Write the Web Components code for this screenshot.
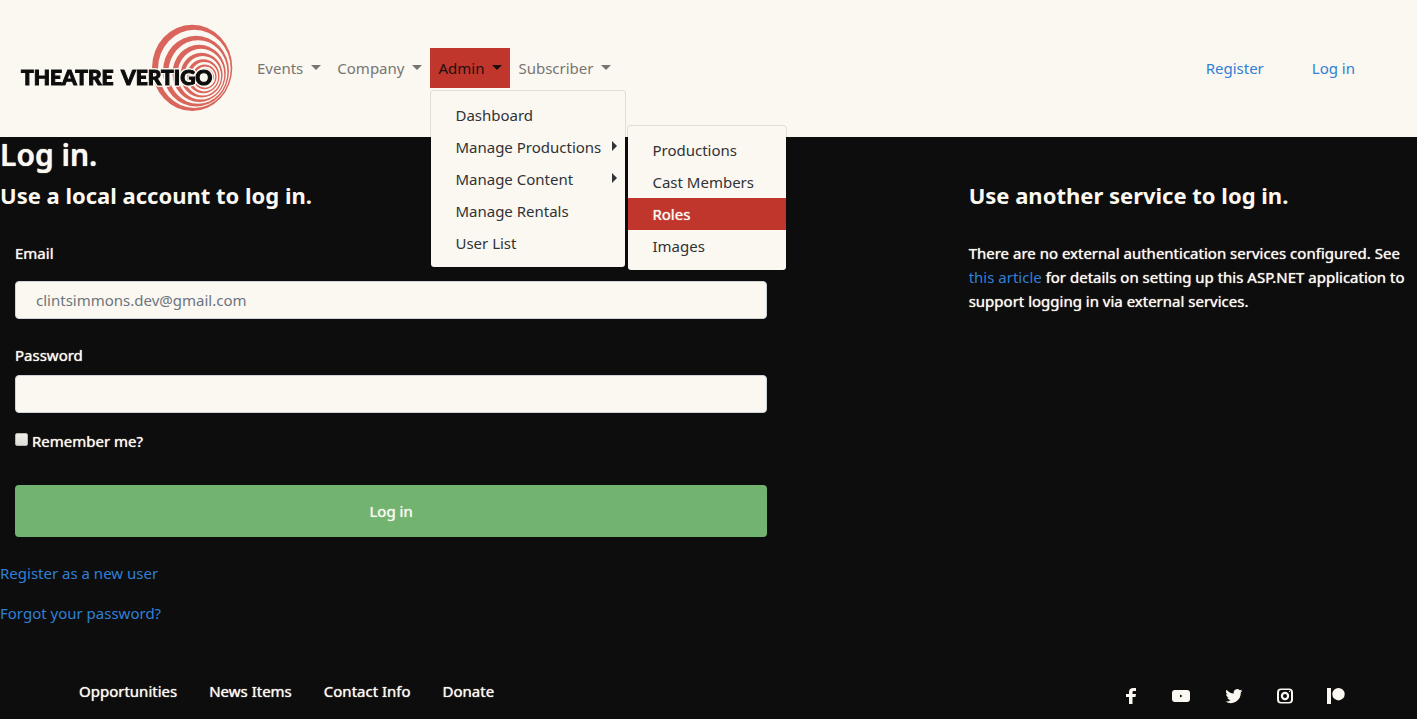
<!DOCTYPE html>
<html lang="en">
<head>
<meta charset="utf-8">
<meta name="viewport" content="width=device-width, initial-scale=1">
<title>Log in - Theatre Vertigo</title>
<style>
  :root { --cream:#fbf8f1; --ink:#0d0d0d; --red:#c0362c; --blue:#2f80d6; --green:#72b46f; --glow:0 0 1px #fbf8f1; }
  html { min-height:100%; background:var(--ink); }
  body { margin:0; min-height:100vh; display:flex; flex-direction:column; background:var(--ink); color:var(--cream);
    font:400 15px/24px "Noto Sans","Open Sans",sans-serif; }
  login-page { flex:1; }
</style>
</head>
<body>
<site-header></site-header>
<login-page></login-page>
<site-footer></site-footer>
<script>
const define = (name, html, after) => customElements.define(name, class extends HTMLElement {
  constructor() {
    super();
    this.attachShadow({ mode: 'open' }).innerHTML = html;
    if (after) after(this, this.shadowRoot);
  }
});

define('brand-logo', `
<style>
  :host { display:block; }
  a { display:block; }
  svg { display:block; width:216px; height:88px; }
  text { font:900 21px Lato,sans-serif; fill:var(--ink); stroke:var(--ink); stroke-width:1px;
    filter:drop-shadow(1px 0 0 #fbf8f1) drop-shadow(-1px 0 0 #fbf8f1) drop-shadow(0 1px 0 #fbf8f1) drop-shadow(0 -1px 0 #fbf8f1); }
</style>
<a href="#" aria-label="Theatre Vertigo home">
<svg viewBox="20 24 216 88">
  <path fill="#d9655c" fill-rule="evenodd"/>
  <text x="21" y="85">THEATRE <tspan x="121">VERTIGO</tspan></text>
</svg></a>`,
(host, root) => {
  // Each ring: left, right, top, bottom of its outer edge, then its thickness on those sides.
  const rings = [
    [152, 232.3, 24.7, 111, 6, 1.6, 5, 3],
    [163, 229, 35.7, 106.5, 5.5, 1.6, 4.5, 2.7],
    [172.5, 225.8, 44.7, 102, 5, 1.5, 4, 2.4],
    [180.5, 222.6, 52.7, 97.5, 4, 1.5, 3.2, 2.1],
    [187, 219.5, 59.3, 93.2, 3.5, 1.4, 2.6, 1.8],
    [192.5, 216.6, 64.5, 89.2, 2.5, 1.3, 2, 1.5],
    [197, 213.8, 68.5, 85.5, 2, 1.2, 1.5, 1.3]
  ];
  const ellipse = (l, r, t, b) => {
    const rx = (r - l) / 2, ry = (b - t) / 2;
    return `M${l} ${(t + b) / 2}a${rx} ${ry} 0 1 0 ${r - l} 0a${rx} ${ry} 0 1 0 ${l - r} 0Z`;
  };
  root.querySelector('path').setAttribute('d', rings.map(([l, r, t, b, dl, dr, dt, db]) =>
    ellipse(l, r, t, b) + ellipse(l + dl, r - dr, t + dt, b - db)).join(''));
});

define('nav-item', `
<style>
  :host { display:block; position:relative; --fg:#777572; }
  :host([active]) { --fg:#1a0f0e; background:var(--red); }
  a { display:flex; align-items:center; gap:8px; padding:8px; color:var(--fg); text-decoration:none; white-space:nowrap; }
  a::after { content:""; border:5px solid transparent; border-top-color:currentColor; border-bottom:0; margin-bottom:2px; }
</style>
<a href="#"><slot></slot></a><slot name="menu"></slot>`);

define('drop-menu', `
<style>
  :host { display:block; position:absolute; top:42px; left:0; z-index:2; box-sizing:border-box; min-width:196px; padding:8px 0;
    background:var(--cream); background-clip:padding-box; border:1px solid rgba(0,0,0,.1); border-radius:4px; }
  :host([slot=submenu]) { top:-6px; left:100%; min-width:160px; margin-left:2px; }
</style>
<slot></slot>`);

define('menu-link', `
<style>
  :host { display:block; position:relative; }
  a { display:flex; justify-content:space-between; align-items:center; padding:4px 8px 4px 24px; color:#303236; text-decoration:none; white-space:nowrap; }
  :host([active]) a { background:var(--red); color:var(--cream); text-shadow:var(--glow); }
  :host([more]) a::after { content:""; border:5px solid transparent; border-left-color:currentColor; border-right:0; margin-bottom:2px; }
</style>
<a href="#"><slot></slot></a><slot name="submenu"></slot>`);

define('site-header', `
<style>
  :host { display:flex; align-items:center; box-sizing:border-box; min-height:137px; padding:0 54px 1px 20px; background:var(--cream); color:var(--ink); }
  nav { display:flex; margin-left:13px; }
  .account { margin-left:auto; gap:32px; }
  .account a { padding:8px; color:var(--blue); text-decoration:none; }
</style>
<brand-logo></brand-logo>
<nav aria-label="Main">
  <nav-item>Events</nav-item>
  <nav-item>Company</nav-item>
  <nav-item active>Admin
    <drop-menu slot="menu">
      <menu-link>Dashboard</menu-link>
      <menu-link more>Manage Productions
        <drop-menu slot="submenu">
          <menu-link>Productions</menu-link>
          <menu-link>Cast Members</menu-link>
          <menu-link active>Roles</menu-link>
          <menu-link>Images</menu-link>
        </drop-menu>
      </menu-link>
      <menu-link more>Manage Content</menu-link>
      <menu-link>Manage Rentals</menu-link>
      <menu-link>User List</menu-link>
    </drop-menu>
  </nav-item>
  <nav-item>Subscriber</nav-item>
</nav>
<nav class="account" aria-label="Account"><a href="#">Register</a><a href="#">Log in</a></nav>`);

define('login-form', `
<style>
  :host { display:block; }
  form { display:flex; flex-direction:column; box-sizing:border-box; width:calc(100% * 5 / 6); padding:0 20px 0 15px; }
  label { display:block; text-shadow:var(--glow); }
  .field { box-sizing:border-box; width:100%; height:38px; padding:6px 20px; border:1px solid #ced4da; border-radius:4px;
    background:var(--cream); color:#495057; font:400 15px/24px "Noto Sans","Open Sans",sans-serif; }
  .field::placeholder { color:#6c757d; opacity:1; }
  #email { margin:16px 0 24px; }
  #password { margin:8px 0 16px; }
  .check { display:flex; align-items:center; gap:4px; }
  .check input { appearance:none; width:13px; height:13px; margin:0 0 3px; border:1px solid #b5b5b1; border-radius:2px; background:linear-gradient(#f0eee8,#dddcd8); }
  button { margin-top:32px; height:52px; border:0; border-radius:4px; background:var(--green); color:var(--cream); text-shadow:var(--glow);
    font:400 15px/24px "Noto Sans","Open Sans",sans-serif; }
</style>
<form>
  <label for="email">Email</label>
  <input class="field" id="email" type="email" placeholder="clintsimmons.dev@gmail.com">
  <label for="password">Password</label>
  <input class="field" id="password" type="password">
  <div class="check"><input id="remember" type="checkbox"><label for="remember">Remember me?</label></div>
  <button type="button">Log in</button>
</form>`);

define('login-page', `
<style>
  :host { display:block; }
  h1, h2 { margin:0; }
  h1 { font-size:30px; line-height:36px; font-weight:600; text-shadow:var(--glow); }
  h2 { font-size:22px; line-height:28px; margin:8px 0 32px; font-weight:700; }
  main { display:grid; grid-template-columns:2fr 1fr; }
  aside { padding:0 4px 0 24px; }
  p { margin:0; }
  aside p { text-shadow:var(--glow); }
  a { color:var(--blue); text-decoration:none; text-shadow:none; }
  .links { display:grid; gap:16px; margin-top:24px; }
</style>
<h1>Log in.</h1>
<main>
  <section>
    <h2>Use a local account to log in.</h2>
    <login-form></login-form>
    <div class="links"><p><a href="#">Register as a new user</a></p><p><a href="#">Forgot your password?</a></p></div>
  </section>
  <aside>
    <h2>Use another service to log in.</h2>
    <p>There are no external authentication services configured. See <a href="#">this article</a> for details on setting up this ASP.NET application to support logging in via external services.</p>
  </aside>
</main>`);

define('social-link', `
<style>
  :host { display:block; }
  a { display:block; color:var(--cream); }
  svg { display:block; width:20px; height:20px; fill:currentColor; }
</style>
<a href="#"><svg viewBox="0 0 20 20" aria-hidden="true"><path fill-rule="evenodd"/></svg></a>`,
(host, root) => {
  const shapes = {
    Facebook: 'M7 18v-7H4V8h3V6c0-3 2-4 4-4h3v3h-2c-1.500 0-1.500.5-1.500 1.500V8h3.500l-.5 3h-3v7Z',
    YouTube: 'M2 4h12q3 0 3 3v6q0 3-3 3H2q-3 0-3-3V7q0-3 3-3ZM7 8.500v3l2.500-1.500Z',
    Twitter: 'M18.500 4.800c-.6.300-1.300.5-2 .6.700-.4 1.300-1.100 1.500-1.900-.7.400-1.400.7-2.200.8A3.500 3.500 0 0 0 9.800 7.500 10 10 0 0 1 2.600 3.800a3.500 3.500 0 0 0 1.100 4.700c-.6 0-1.100-.2-1.600-.4 0 1.700 1.200 3.100 2.800 3.500-.5.100-1 .1-1.600 0 .4 1.400 1.700 2.400 3.300 2.400A7 7 0 0 1 1.500 15.500a10 10 0 0 0 15.300-8.900q1-.7 1.700-1.800Z',
    Instagram: 'M6 2.500h8q4 0 4 4v7q0 4-4 4H6q-4 0-4-4v-7q0-4 4-4ZM6.200 4Q4 4 4 6.200v7.600Q4 16 6.200 16h7.600q2.200 0 2.200-2.200V6.200Q16 4 13.800 4ZM10 5.800a4.200 4.200 0 1 1 0 8.400a4.200 4.200 0 1 1 0-8.400ZM10 8a2 2 0 1 0 0 4a2 2 0 1 0 0-4ZM14 5h1v1h-1Z',
    Patreon: 'M1 2h4v16H1ZM12.500 2a6.200 6.200 0 1 1 0 12.400a6.200 6.200 0 1 1 0-12.400Z'
  };
  const kind = host.getAttribute('kind');
  root.querySelector('svg').style.overflow = 'visible';
  root.querySelector('a').setAttribute('aria-label', kind);
  root.querySelector('path').setAttribute('d', shapes[kind]);
});

define('site-footer', `
<style>
  :host { display:flex; align-items:center; justify-content:space-between; padding:0 71px 13px 79px; }
  nav { display:flex; gap:32px; }
  nav a { color:var(--cream); text-decoration:none; text-shadow:var(--glow); }
  .social { gap:31px; padding-top:10px; }
</style>
<nav aria-label="Footer"><a href="#">Opportunities</a><a href="#">News Items</a><a href="#">Contact Info</a><a href="#">Donate</a></nav>
<nav class="social" aria-label="Social media">
  <social-link kind="Facebook"></social-link><social-link kind="YouTube"></social-link><social-link kind="Twitter"></social-link><social-link kind="Instagram"></social-link><social-link kind="Patreon"></social-link>
</nav>`);
</script>
</body>
</html>
